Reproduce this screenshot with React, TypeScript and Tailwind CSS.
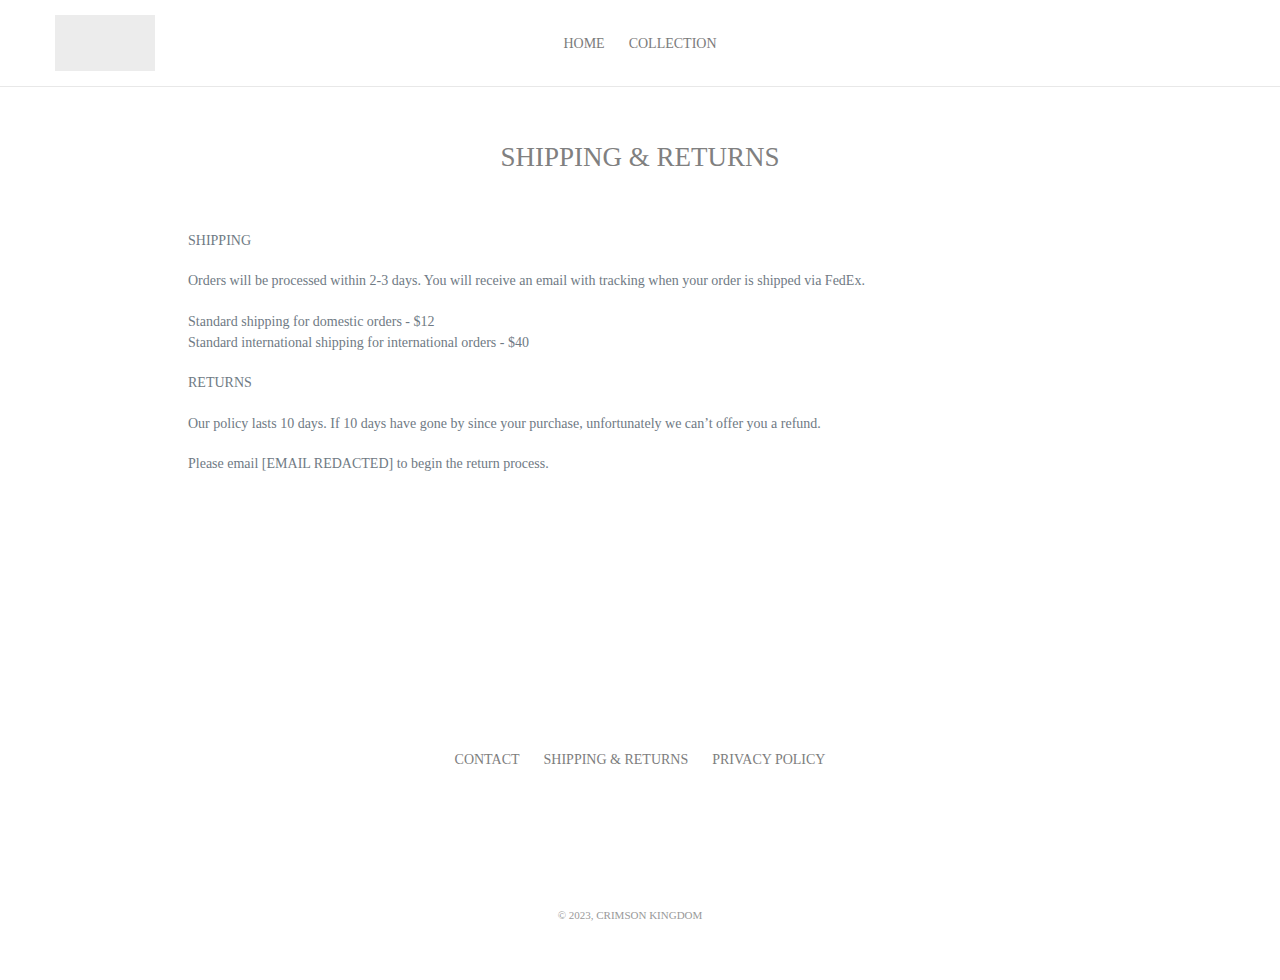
export default function App() {
    return (
        <div className="min-h-screen flex flex-col bg-white font-['Liberation_Serif',serif]">
            <header className="grid grid-cols-[1fr_auto_1fr] items-center px-[55px] py-[15px] border-b border-[#e8e8e8]">
                <div className="w-[100px] h-[56px] bg-[#ececec]"></div>
                <nav className="flex gap-6 text-[14px] leading-[21px] text-[#7b7b7b]">
                    <a href="#">HOME</a>
                    <a href="#">COLLECTION</a>
                </nav>
                <div></div>
            </header>

            <main className="flex-1">
                <h1 className="pt-[54px] text-center text-[27px] leading-[32px] text-[#808080]">SHIPPING &amp; RETURNS</h1>
                <div className="mx-auto w-[904px] mt-[56.5px] text-[14px] leading-[21px] text-[#6f7a84]">
                    <p className="mb-[19.5px]">SHIPPING</p>
                    <p className="mb-[19.5px]">Orders will be processed within 2-3 days. You will receive an email with tracking when your order is shipped via FedEx.</p>
                    <p className="mb-[19.5px]">
                        Standard shipping for domestic orders - $12
                        <br />
                        Standard international shipping for international orders - $40
                    </p>
                    <p className="mb-[19.5px]">RETURNS</p>
                    <p className="mb-[19.5px]">Our policy lasts 10 days. If 10 days have gone by since your purchase, unfortunately we can’t offer you a refund.</p>
                    <p>Please email [EMAIL REDACTED] to begin the return process.</p>
                </div>
            </main>

            <footer className="flex flex-col items-center pb-[57px]">
                <div className="flex gap-6 text-[14px] leading-[21px] text-[#7d7d7d]">
                    <a href="#">CONTACT</a>
                    <a href="#">SHIPPING &amp; RETURNS</a>
                    <a href="#">PRIVACY POLICY</a>
                </div>
                <p className="mt-[137.5px] pr-[20px] text-[11px] leading-[16px] text-[#999999]">© 2023, CRIMSON KINGDOM</p>
            </footer>
        </div>
    );
}
